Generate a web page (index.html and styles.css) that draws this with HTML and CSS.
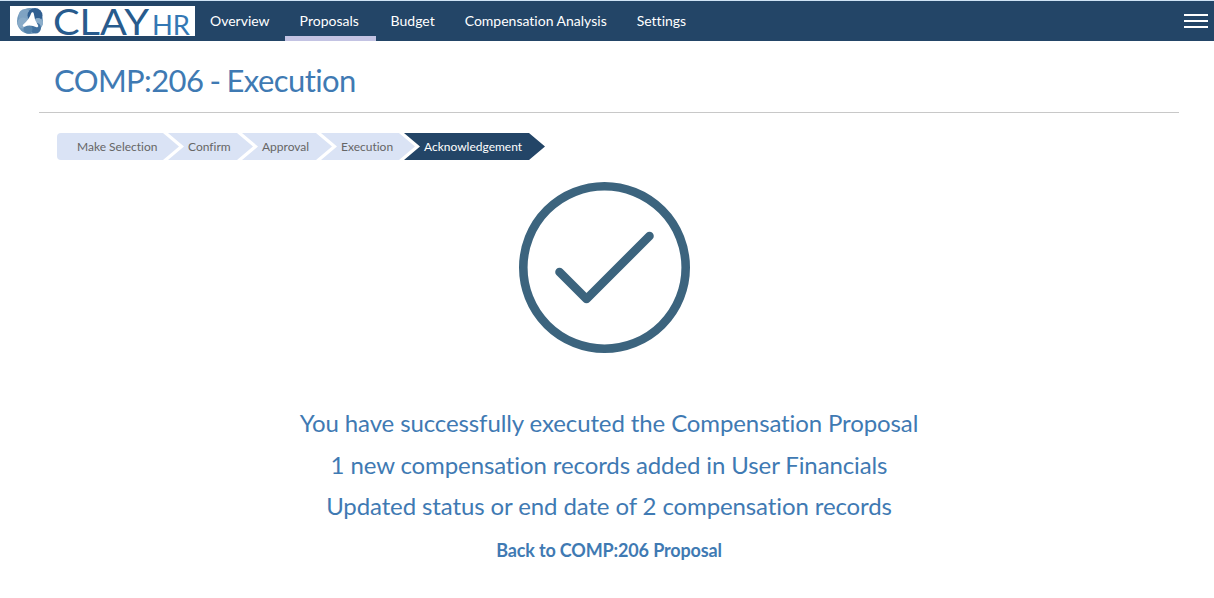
FILE: index.html
```html
<!DOCTYPE html>
<html lang="en">
<head>
  <meta charset="UTF-8" />
  <title>COMP:206 - Execution</title>
  <meta name="viewport" content="width=device-width, initial-scale=1.0" />
  <link rel="stylesheet" href="styles.css">
</head>
<body>
  <header class="navbar">
    <a class="logo" href="#">
      <svg width="185" height="30" viewBox="0 0 185 30">
        <circle cx="20" cy="15" r="13" fill="#6f98bb" />
        <circle cx="15" cy="9.500" r="6.500" fill="#7fa3c3" />
        <circle cx="25" cy="9.500" r="7.500" fill="#305f91" />
        <circle cx="28" cy="17" r="5" fill="#8badca" />
        <circle cx="25.500" cy="22" r="5.500" fill="#41719f" />
        <circle cx="13" cy="17" r="5.500" fill="#89abc8" />
        <circle cx="18" cy="23" r="4.500" fill="#5583ab" />
        <path d="M22.500 7.500Q23 14 27 20Q20 17 14 19.500Q20 15 22.500 7.500Z" fill="#fff" stroke="#fff" stroke-width="2.500" stroke-linejoin="round" />
        <text class="logo-clay" x="43" y="28.500" textLength="96" lengthAdjust="spacingAndGlyphs">CLAY</text>
        <text class="logo-hr" x="142" y="28.500" textLength="38" lengthAdjust="spacingAndGlyphs">HR</text>
      </svg>
    </a>
    <nav class="nav-links">
      <a href="#">Overview</a>
      <a class="active" href="#">Proposals</a>
      <a href="#">Budget</a>
      <a href="#">Compensation Analysis</a>
      <a href="#">Settings</a>
    </nav>
    <button class="menu-btn" aria-label="Menu"><span></span><span></span><span></span></button>
  </header>

  <main class="page">
    <h1 class="page-title">COMP:206 - Execution</h1>

    <ol class="steps">
      <li class="step step-selection">Make Selection</li>
      <li class="step step-confirm">Confirm</li>
      <li class="step step-approval">Approval</li>
      <li class="step step-execution">Execution</li>
      <li class="step step-current">Acknowledgement</li>
    </ol>

    <section class="result">
      <svg class="check" width="172" height="172" viewBox="0 0 172 172">
        <circle cx="85.500" cy="86.500" r="81.200" />
        <path d="M40.500 91L67.500 118L130.500 55" />
      </svg>
      <p class="message">You have successfully executed the Compensation Proposal</p>
      <p class="message">1 new compensation records added in User Financials</p>
      <p class="message">Updated status or end date of 2 compensation records</p>
      <a class="back-link" href="#">Back to COMP:206 Proposal</a>
    </section>
  </main>
</body>
</html>
```
FILE: styles.css
```css
* {
  box-sizing: border-box;
}
body {
  margin: 0;
  background-color: #fff;
  font-family: Lato, sans-serif;
  font-size: 14px;
  font-variant-ligatures: none;
}
a {
  text-decoration: none;
}
.navbar {
  display: flex;
  height: 41px;
  padding: 0 6px 0 10px;
  border-top: 1px solid #cfe3f5;
  background-color: #234567;
}
.logo {
  width: 185px;
  height: 30px;
  margin-top: 5px;
  background-color: #fff;
}
.logo svg {
  display: block;
  overflow: visible;
}
.logo-clay {
  fill: #285b8d;
  font-size: 36px;
}
.logo-hr {
  fill: #3478b4;
  font-size: 26px;
}
.nav-links {
  display: flex;
}
.nav-links a {
  height: 40px;
  padding: 0 15px;
  color: #fff;
  line-height: 40px;
}
.nav-links .active {
  width: 91px;
  border-bottom: 5px solid #c3c3e3;
}
.menu-btn {
  display: flex;
  flex-direction: column;
  gap: 4px;
  width: 24px;
  margin: 13px 0 0 auto;
  padding: 0;
  border: 0;
  background: none;
}
.menu-btn span {
  width: 24px;
  height: 2px;
  background-color: #fff;
}
.page {
  padding: 0 35px 0 39px;
}
.page-title {
  height: 72px;
  margin: 0;
  padding-left: 15px;
  border-bottom: 1px solid #c8c8c8;
  color: #3f7ab3;
  font-size: 31px;
  font-weight: 400;
  letter-spacing: -0.6px;
  word-spacing: -1.2px;
  line-height: 79px;
}
.steps {
  display: flex;
  margin: 20px 0 0;
  padding: 0 0 0 18px;
  list-style: none;
}
.step {
  height: 27px;
  margin-left: -11px;
  padding-left: 20px;
  background-color: #dae3f5;
  clip-path: polygon(0 0, calc(100% - 16px) 0, 100% 50%, calc(100% - 16px) 100%, 0 100%, 16px 50%);
  color: #666;
  font-size: 12px;
  line-height: 27px;
  white-space: nowrap;
}
.step-selection {
  width: 122px;
  margin-left: 0;
  border-radius: 4px 0 0 4px;
  clip-path: polygon(0 0, calc(100% - 16px) 0, 100% 50%, calc(100% - 16px) 100%, 0 100%);
}
.step-confirm {
  width: 85px;
}
.step-approval {
  width: 90px;
}
.step-execution {
  width: 94px;
}
.step-current {
  width: 141px;
  background-color: #234567;
  color: #fff;
}
.result {
  display: flex;
  flex-direction: column;
  align-items: center;
  padding-top: 21px;
}
.check {
  margin: 0 9px 50px 0;
  fill: none;
  stroke: #3c647e;
  stroke-width: 8.6;
  stroke-linecap: round;
  stroke-linejoin: round;
}
.message {
  margin: 0 0 1.6px;
  color: #3f7ab3;
  font-size: 24px;
  letter-spacing: -0.11px;
  line-height: 40px;
}
.back-link {
  margin-top: 10px;
  color: #3f7ab3;
  font-size: 18px;
  font-weight: 700;
  letter-spacing: -0.15px;
  line-height: 24px;
}
```
